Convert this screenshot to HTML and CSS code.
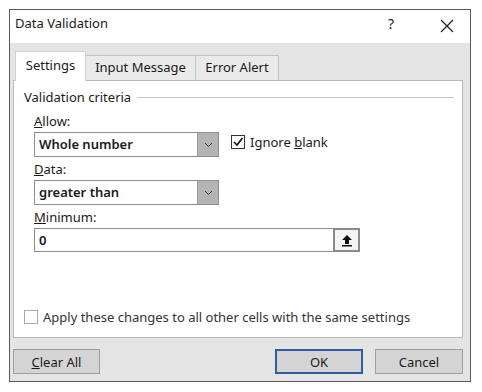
FILE: index.html
```html
<!DOCTYPE html>
<html lang="en">
<head>
    <meta charset="UTF-8">
    <title>Data Validation</title>
    <link rel="stylesheet" href="styles.css">
</head>
<body>

<div class="dialog">
    <div class="titlebar">
        <span class="title">Data Validation</span>
        <span class="help">?</span>
        <span class="close">
            <svg width="14" height="14" viewBox="0 0 14 14"><path d="M1 1L13 13M13 1L1 13" stroke="#222" stroke-width="1.3" fill="none"/></svg>
        </span>
    </div>

    <div class="body">
        <div class="tabs">
            <div class="tab active">Settings</div>
            <div class="tab tab-input">Input Message</div>
            <div class="tab tab-error">Error Alert</div>
        </div>

        <div class="panel">
            <div class="group-title">
                <span>Validation criteria</span>
                <div class="rule"></div>
            </div>

            <div class="fields">
                <label class="field-label"><u>A</u>llow:</label>
                <div class="row">
                    <div class="select">
                        <span class="value">Whole number</span>
                        <span class="arrow">
                            <svg width="9" height="6" viewBox="0 0 9 6"><path d="M1 1L4.5 4.5L8 1" stroke="#333" stroke-width="1" fill="none"/></svg>
                        </span>
                    </div>
                    <label class="check">
                        <span class="box">
                            <svg width="12" height="12" viewBox="0 0 12 12"><path d="M2 6L5 9L10.5 2" stroke="#111" stroke-width="1.6" fill="none"/></svg>
                        </span>
                        <span>Ignore <u>b</u>lank</span>
                    </label>
                </div>

                <label class="field-label"><u>D</u>ata:</label>
                <div class="select">
                    <span class="value">greater than</span>
                    <span class="arrow">
                        <svg width="9" height="6" viewBox="0 0 9 6"><path d="M1 1L4.5 4.5L8 1" stroke="#333" stroke-width="1" fill="none"/></svg>
                    </span>
                </div>

                <label class="field-label"><u>M</u>inimum:</label>
                <div class="input">
                    <span class="value">0</span>
                    <span class="ref-btn">
                        <svg width="12" height="13" viewBox="0 0 12 13"><path d="M6 1L11 6H8V10H4V6H1Z" fill="#111"/><rect x="1" y="11" width="10" height="1.5" fill="#111"/></svg>
                    </span>
                </div>
            </div>

            <label class="check apply">
                <span class="box"></span>
                <span>Apply these changes to all other cells with the same settings</span>
            </label>
        </div>

        <div class="buttons">
            <button class="btn btn-clear"><u>C</u>lear All</button>
            <div class="spacer"></div>
            <button class="btn default">OK</button>
            <button class="btn">Cancel</button>
        </div>
    </div>
</div>

</body>
</html>
```

FILE: styles.css
```css
body {
    margin: 0;
    background-color: #fff;
    font-family: "Noto Sans", "Open Sans", sans-serif;
    font-size: 13px;
    color: #1a1a1a;
}
.dialog {
    margin: 9px 0 0 9px;
    width: 460px;
    border: 1px solid #5a5a5a;
    background-color: #fff;
}
.titlebar {
    height: 33px;
    display: flex;
    align-items: flex-start;
    padding: 4px 0 0 5px;
    box-sizing: border-box;
    background-color: #fff;
}
.title {
    flex: 1;
    font-size: 13px;
}
.help {
    width: 10px;
    font-size: 14px;
    margin-right: 42px;
}
.close {
    width: 14px;
    margin: 5px 16px 0 0;
    display: flex;
}
.body {
    background-color: #e4e4e4;
    padding: 8px 7px 7px 3px;
}
.tabs {
    display: flex;
    align-items: flex-end;
    margin-left: 2px;
    height: 29px;
}
.tab {
    height: 25px;
    line-height: 22px;
    box-sizing: border-box;
    border: 1px solid #c2c2c2;
    border-bottom: none;
    background-color: #eaeaea;
    text-align: center;
}
.tab-input {
    width: 110px;
    border-left: none;
}
.tab-error {
    width: 83px;
    border-left: none;
}
.tab.active {
    height: 30px;
    line-height: 27px;
    width: 71px;
    background-color: #fff;
    border-color: #cfcfcf;
    margin-bottom: -1px;
    position: relative;
    z-index: 1;
}
.panel {
    background-color: #fff;
    border: 1px solid #b9b9b9;
    height: 258px;
    box-sizing: border-box;
    padding: 8px 8px 0 10px;
    display: flex;
    flex-direction: column;
}
.group-title {
    display: flex;
    align-items: center;
    gap: 6px;
    height: 16px;
}
.rule {
    flex: 1;
    border-top: 1px solid #c8c8c8;
    margin-top: 1px;
}
.fields {
    padding-left: 10px;
    margin-top: 9px;
    flex: 1;
}
.field-label {
    display: block;
    height: 15px;
    line-height: 15px;
    margin-bottom: 3px;
}
.row {
    display: flex;
    align-items: flex-start;
    gap: 12px;
    margin-bottom: 5px;
}
.select {
    width: 185px;
    height: 25px;
    box-sizing: border-box;
    border: 1px solid #8e8e8e;
    display: flex;
    margin-bottom: 5px;
    font-weight: 600;
}
.row .select {
    margin-bottom: 0;
}
.value {
    flex: 1;
    padding-left: 4px;
    line-height: 23px;
}
.arrow {
    width: 20px;
    background-color: #b4b4b4;
    border-left: 1px solid #9a9a9a;
    display: flex;
    align-items: center;
    justify-content: center;
}
.check {
    display: flex;
    align-items: center;
    gap: 5px;
    margin-top: 1px;
}
.box {
    width: 14px;
    height: 14px;
    box-sizing: border-box;
    border: 1px solid #333;
    background-color: #fff;
    display: flex;
    align-items: center;
    justify-content: center;
}
.input {
    width: 326px;
    height: 24px;
    box-sizing: border-box;
    border: 1px solid #8e8e8e;
    display: flex;
    font-weight: 600;
}
.ref-btn {
    width: 23px;
    border: 2px solid #8a8a8a;
    margin: -1px -1px -1px 0;
    background-color: #f4f4f4;
    display: flex;
    align-items: center;
    justify-content: center;
}
.apply {
    margin-bottom: 11px;
    color: #333;
}
.apply .box {
    border-color: #aaa;
}
.buttons {
    display: flex;
    gap: 12px;
    margin-top: 11px;
}
.spacer {
    flex: 1;
}
.btn {
    width: 88px;
    height: 25px;
    font-family: "Noto Sans", "Open Sans", sans-serif;
    font-size: 13px;
    color: #1a1a1a;
    background-color: #d4d4d4;
    border: 1px solid #9f9f9f;
    padding: 0;
}
.btn-clear {
    width: 87px;
}
.btn.default {
    border: 2px solid #2f5d9e;
}
```
